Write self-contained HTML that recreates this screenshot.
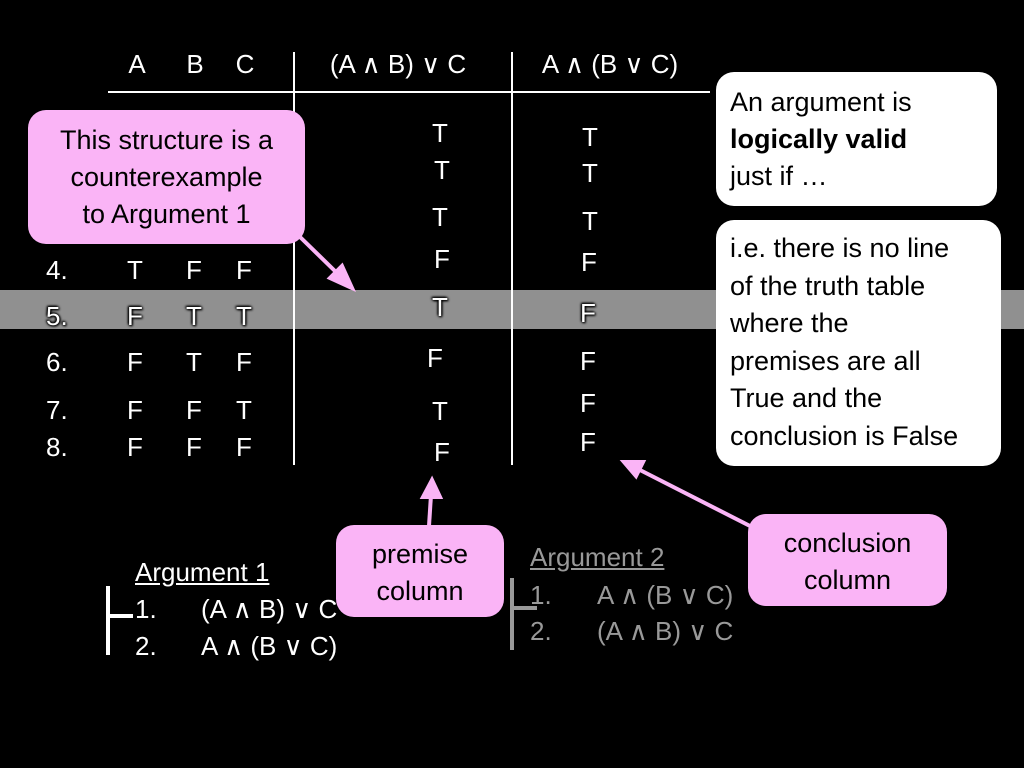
<!DOCTYPE html>
<html><head><meta charset="utf-8"><style>
body{margin:0;width:1024px;height:768px;background:#000;position:relative;overflow:hidden;font-family:"Liberation Sans",sans-serif;color:#fff}
.t{position:absolute;font-size:26px;line-height:28px;white-space:nowrap}
.c{transform:translateX(-50%)}
.box{position:absolute;border-radius:18px;color:#000;font-size:27px;line-height:37px;box-sizing:border-box;white-space:nowrap}
.pink{background:#fab4f6;text-align:center}
.white{background:#fff;padding-left:14px}
.g{color:#999}
.o{text-shadow:0 0 2px #000,0 0 3px #000,1px 1px 2px #000,-1px -1px 2px #000}
</style></head><body>
<div style="position:absolute;left:0;top:290px;width:1024px;height:39px;background:#909090"></div>
<div style="position:absolute;left:293px;top:52px;width:2px;height:413px;background:#fff"></div>
<div style="position:absolute;left:511px;top:52px;width:2px;height:413px;background:#fff"></div>
<div style="position:absolute;left:108px;top:91px;width:602px;height:2px;background:#fff"></div>

<div class="t c" style="left:137px;top:50px">A</div>
<div class="t c" style="left:195px;top:50px">B</div>
<div class="t c" style="left:245px;top:50px">C</div>
<div class="t c" style="left:398px;top:50px">(A ∧ B) ∨ C</div>
<div class="t c" style="left:610px;top:50px">A ∧ (B ∨ C)</div>

<div class="t" style="left:46px;top:256px">4.</div>
<div class="t c" style="left:135px;top:256px">T</div>
<div class="t c" style="left:194px;top:256px">F</div>
<div class="t c" style="left:244px;top:256px">F</div>
<div class="t o" style="left:46px;top:302px">5.</div>
<div class="t c o" style="left:135px;top:302px">F</div>
<div class="t c o" style="left:194px;top:302px">T</div>
<div class="t c o" style="left:244px;top:302px">T</div>
<div class="t" style="left:46px;top:348px">6.</div>
<div class="t c" style="left:135px;top:348px">F</div>
<div class="t c" style="left:194px;top:348px">T</div>
<div class="t c" style="left:244px;top:348px">F</div>
<div class="t" style="left:46px;top:396px">7.</div>
<div class="t c" style="left:135px;top:396px">F</div>
<div class="t c" style="left:194px;top:396px">F</div>
<div class="t c" style="left:244px;top:396px">T</div>
<div class="t" style="left:46px;top:433px">8.</div>
<div class="t c" style="left:135px;top:433px">F</div>
<div class="t c" style="left:194px;top:433px">F</div>
<div class="t c" style="left:244px;top:433px">F</div>

<div class="t c" style="left:440px;top:119px">T</div>
<div class="t c" style="left:442px;top:156px">T</div>
<div class="t c" style="left:440px;top:203px">T</div>
<div class="t c" style="left:442px;top:245px">F</div>
<div class="t c o" style="left:440px;top:293px">T</div>
<div class="t c" style="left:435px;top:344px">F</div>
<div class="t c" style="left:440px;top:397px">T</div>
<div class="t c" style="left:442px;top:438px">F</div>

<div class="t c" style="left:590px;top:123px">T</div>
<div class="t c" style="left:590px;top:159px">T</div>
<div class="t c" style="left:590px;top:207px">T</div>
<div class="t c" style="left:589px;top:248px">F</div>
<div class="t c o" style="left:588px;top:299px">F</div>
<div class="t c" style="left:588px;top:347px">F</div>
<div class="t c" style="left:588px;top:389px">F</div>
<div class="t c" style="left:588px;top:428px">F</div>

<svg style="position:absolute;left:0;top:0" width="1024" height="768">
<g stroke="#fab4f6" stroke-width="4" fill="#fab4f6">
<line x1="298" y1="235" x2="338" y2="274"/><polygon points="352,288 330,278 342,266"/>
<line x1="429" y1="526" x2="431" y2="495"/><polygon points="432,480 423,497 440,497"/>
<line x1="750" y1="526" x2="640" y2="470"/><polygon points="624,462 643,462 636,476"/>
</g>
<g stroke="#fff" stroke-width="4"><line x1="108" y1="586" x2="108" y2="655"/><line x1="108" y1="616" x2="133" y2="616"/></g>
<g stroke="#999" stroke-width="4"><line x1="512" y1="578" x2="512" y2="650"/><line x1="512" y1="608" x2="537" y2="608"/></g>
</svg>

<div class="box pink" style="left:28px;top:110px;width:277px;height:134px;padding-top:12px">This structure is a<br>counterexample<br>to Argument 1</div>
<div class="box white" style="left:716px;top:72px;width:281px;height:134px;padding-top:12px">An argument is<br><b>logically valid</b><br>just if …</div>
<div class="box white" style="left:716px;top:220px;width:285px;height:246px;padding-top:10px;line-height:37.5px">i.e. there is no line<br>of the truth table<br>where the<br>premises are all<br>True and the<br>conclusion is False</div>

<div class="t" style="left:135px;top:558px;text-decoration:underline">Argument 1</div>
<div class="t" style="left:135px;top:595px">1.</div><div class="t" style="left:201px;top:595px">(A ∧ B) ∨ C</div>
<div class="t" style="left:135px;top:632px">2.</div><div class="t" style="left:201px;top:632px">A ∧ (B ∨ C)</div>
<div class="box pink" style="left:336px;top:525px;width:168px;height:92px;padding-top:11px">premise<br>column</div>

<div class="t g" style="left:530px;top:543px;text-decoration:underline">Argument 2</div>
<div class="t g" style="left:530px;top:581px">1.</div><div class="t g" style="left:597px;top:581px">A ∧ (B ∨ C)</div>
<div class="t g" style="left:530px;top:617px">2.</div><div class="t g" style="left:597px;top:617px">(A ∧ B) ∨ C</div>
<div class="box pink" style="left:748px;top:514px;width:199px;height:92px;padding-top:11px">conclusion<br>column</div>
</body></html>
